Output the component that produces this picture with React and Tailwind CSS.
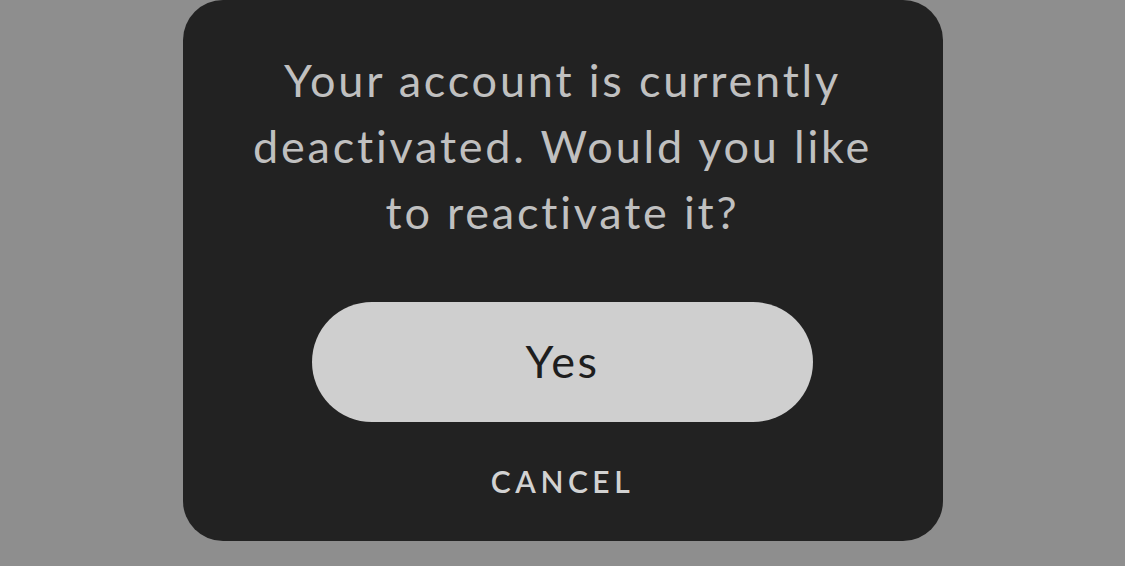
import React from "react";

const App = () => {
  return (
    <div className="w-[1125px] h-[566px] bg-[#8e8e8e] flex justify-center overflow-hidden font-['Lato','Open_Sans',sans-serif]">
      {/* Dialog card */}
      <div className="w-[760px] h-[541px] bg-[#222222] rounded-[40px] flex flex-col items-center">
        <p className="pt-[47px] text-center text-[45px] leading-[66px] tracking-[2.8px] text-[#c0c0c0]">
          Your account is currently
          <br />
          deactivated. Would you like
          <br />
          to reactivate it?
        </p>

        <button className="mt-[57px] w-[501px] h-[120px] rounded-full bg-[#cfcfcf] text-[#1e1e1e] text-[45px] tracking-[2.5px] flex items-center justify-center">
          Yes
        </button>

        <button className="mt-[41px] h-[36px] text-[30px] leading-[36px] tracking-[4.5px] font-semibold text-[#d2d2d2]">
          CANCEL
        </button>
      </div>
    </div>
  );
};

export default App;
